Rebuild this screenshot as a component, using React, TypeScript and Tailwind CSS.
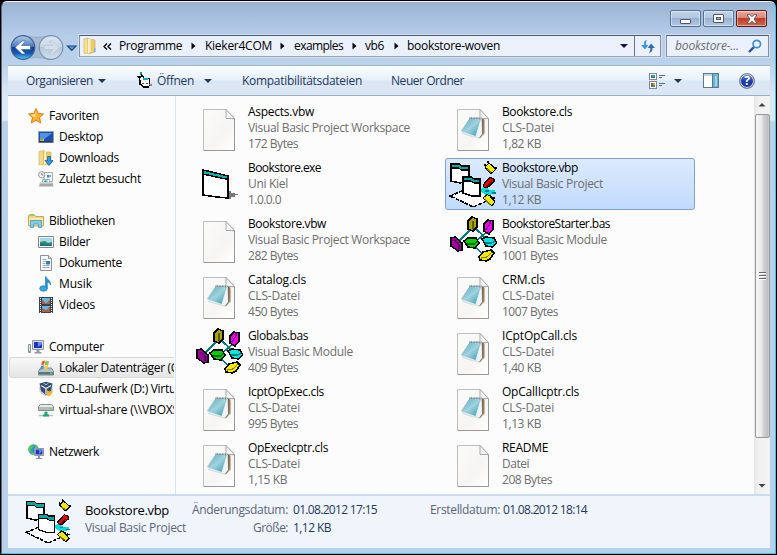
import { useLayoutEffect, useRef, type ReactNode } from "react";

/** Single-line label whose tracking is adjusted so that it fills a given width. */
function Fit({ t, w, className = "" }: { t: string; w: number; className?: string }) {
  const ref = useRef<HTMLSpanElement>(null);
  useLayoutEffect(() => {
    const el = ref.current;
    if (!el) return;
    el.style.letterSpacing = "0px";
    const natural = el.getBoundingClientRect().width;
    el.style.letterSpacing = `${(w + 1 - natural) / t.length}px`;
  }, [t, w]);
  return (
    <span ref={ref} className={`inline-block w-max shrink-0 whitespace-pre ${className}`}>
      {t}
    </span>
  );
}

function Page({ note = false }: { note?: boolean }) {
  return (
    <svg width="48" height="48" viewBox="0 0 48 48" className="shrink-0">
      <defs>
        <linearGradient id="paper" x1="0" y1="0" x2="1" y2="1">
          <stop offset="0" stopColor="#fbfbfa" />
          <stop offset=".6" stopColor="#f6f5f3" />
          <stop offset="1" stopColor="#fff" />
        </linearGradient>
        <linearGradient id="cover" x1="0" y1="0" x2="1" y2="1">
          <stop offset="0" stopColor="#5aa3b6" />
          <stop offset=".5" stopColor="#9fd3de" />
          <stop offset="1" stopColor="#3797ae" />
        </linearGradient>
      </defs>
      <path d="M8.500 5.500H31l8.500 9V46.500H8.500Z" fill="url(#paper)" stroke="#bdbdbd" />
      <path d="M9 46.500H39.500V15" fill="none" stroke="#979797" />
      <path d="M31 5.500V14.500H39.500Z" fill="#f4f4f4" stroke="#a9a9a9" />
      {note && (
        <g>
          <path d="M33 14.500l2.500 1v14l-4.500 4.500-2-2z" fill="#9b7a54" />
          <path d="M20.500 14.500l12-1L34 30l-3.500 4.500-17-5z" fill="#e3edf1" stroke="#b5c6cc" strokeWidth=".5" />
          <path d="M20.500 14.500l11.500.5-5.500 17L12 27z" fill="url(#cover)" />
          <path d="M20.500 14l12 .5" stroke="#6b777b" strokeWidth="1.500" strokeDasharray="1 .6" />
          <path d="M31.500 16.500l1.500 13-3 3.500-3-1z" fill="#eef4f7" />
          <path d="M33.500 15v15l-3 4" stroke="#6d5a45" strokeWidth=".8" fill="none" />
        </g>
      )}
    </svg>
  );
}

function Exe() {
  return (
    <svg width="48" height="48" viewBox="0 0 48 48" shapeRendering="crispEdges" className="shrink-0">
      <path d="M8 10L33 16V38L22 37L8 35Z" fill="#fff" stroke="#000" strokeWidth="1.600" />
      <path d="M8 10L33 16V19.500L8 14Z" fill="#00b5b5" stroke="#000" strokeWidth="1.500" />
      <path d="M34 31H36V33H40V34H43V35H40V37H36V39H34Z" fill="#777" />
    </svg>
  );
}

function Vbp({ size = 48 }: { size?: number }) {
  return (
    <svg width={size} height={size} viewBox="0 0 48 48" shapeRendering="crispEdges" className="shrink-0">
      <path d="M1 36L13 31H32L45 38L24 47L14 42Z" fill="#fff" stroke="#000" strokeWidth="1.500" strokeDasharray="4 1" />
      <path d="M2 4L10 4L12 6H20V21L11 23L2 21Z" fill="#fff" stroke="#000" strokeWidth="1.600" />
      <path d="M2 4H10L12 6H20V10H12L10 8H2Z" fill="#00a8a8" stroke="#000" strokeWidth="1.100" />
      <path d="M31 28L37 27L40 30H46V33L41 35H37L31 31Z" fill="#00dede" />
      <path d="M36 31h4m3 2h4" stroke="#007f7f" strokeWidth="1.200" />
      <path d="M14 17H22L25 19H31V36H23L14 33Z" fill="#fff" stroke="#000" strokeWidth="1.600" />
      <path d="M14 17H22L25 19H31V23H25L22 21H14Z" fill="#00a8a8" stroke="#000" strokeWidth="1.100" />
      <path d="M36 7L40 3L47 9L43 13H41Z" fill="#f2e800" stroke="#000" strokeWidth="1.200" />
      <path d="M39 1v2M35 5h2M45 8h3" stroke="#000" strokeWidth="1.500" />
      <path d="M38 9L42 12.500" stroke="#7d7700" strokeWidth="1.500" />
      <path d="M34 25L41 17.500L45 19V22L38 28L35 27Z" fill="#ed0000" stroke="#000" strokeWidth="1.200" />
      <path d="M37 27L43 21.500" stroke="#800000" strokeWidth="1.500" />
      <path d="M34 38L38 34.500L41 36L46 42L43 45.500L40 44Z" fill="#f2e800" stroke="#000" strokeWidth="1.200" />
      <path d="M36 39.500L41 44" stroke="#7d7700" strokeWidth="1.500" />
    </svg>
  );
}

function Bas() {
  return (
    <svg width="48" height="48" viewBox="0 0 48 48" shapeRendering="crispEdges" className="shrink-0">
      <path d="M21 14L10 25M27 13L40 25M38 16L26 26M24 29L35 39" stroke="#007c7c" strokeWidth="1.800" />
      <g stroke="#000" strokeWidth="1.500">
        <path d="M19 5L23 1L28 3V11L24 15L19 13Z" fill="#a8a300" />
        <path d="M35 8L39 4L44 5V13L40 18L35 15Z" fill="#f000f0" />
        <path d="M2 22L6 21L13 27V34L9 35L2 30Z" fill="#a000a0" />
        <path d="M15 25L19 22L27 22L30 27L26 32L19 31Z" fill="#00cf00" />
        <path d="M33 23L37 21L45 22L48 27L43 31L37 30Z" fill="#00e4e4" />
        <path d="M30 41L34 36L42 34L45 37L41 43L37 45L31 44Z" fill="#f2e800" />
      </g>
      <g fill="none" strokeWidth="1.400">
        <path d="M24 5V13" stroke="#5e5b00" />
        <path d="M37 14L41 8V5" stroke="#850085" />
        <path d="M5 24L10 28V33" stroke="#500050" />
        <path d="M18 28H26L28 25" stroke="#007000" />
        <path d="M36 27H43L46 25" stroke="#007f7f" />
        <path d="M32 42L38 41L43 36" stroke="#858000" />
      </g>
    </svg>
  );
}

type Kind = "page" | "note" | "exe" | "vbp" | "bas";
interface FileItem {
  kind: Kind;
  name: [string, number];
  type: [string, number];
  size: [string, number];
  sel?: boolean;
}

const CLS: [string, number] = ["CLS-Datei", 51];
const WS: [string, number] = ["Visual Basic Project Workspace", 161];
const MOD: [string, number] = ["Visual Basic Module", 104];

const files: FileItem[] = [
  { kind: "page", name: ["Aspects.vbw", 65], type: WS, size: ["172 Bytes", 49] },
  { kind: "note", name: ["Bookstore.cls", 69], type: CLS, size: ["1,82 KB", 38] },
  { kind: "exe", name: ["Bookstore.exe", 72], type: ["Uni Kiel", 39], size: ["1.0.0.0", 32] },
  { kind: "vbp", name: ["Bookstore.vbp", 75], type: ["Visual Basic Project", 100], size: ["1,12 KB", 38], sel: true },
  { kind: "page", name: ["Bookstore.vbw", 77], type: WS, size: ["282 Bytes", 49] },
  { kind: "bas", name: ["BookstoreStarter.bas", 107], type: MOD, size: ["1001 Bytes", 55] },
  { kind: "note", name: ["Catalog.cls", 57], type: CLS, size: ["450 Bytes", 49] },
  { kind: "note", name: ["CRM.cls", 42], type: CLS, size: ["1007 Bytes", 55] },
  { kind: "bas", name: ["Globals.bas", 59], type: MOD, size: ["409 Bytes", 49] },
  { kind: "note", name: ["ICptOpCall.cls", 74], type: CLS, size: ["1,40 KB", 38] },
  { kind: "note", name: ["IcptOpExec.cls", 75], type: CLS, size: ["995 Bytes", 49] },
  { kind: "note", name: ["OpCallIcptr.cls", 76], type: CLS, size: ["1,13 KB", 38] },
  { kind: "note", name: ["OpExecIcptr.cls", 79], type: CLS, size: ["1,15 KB", 38] },
  { kind: "page", name: ["README", 45], type: ["Datei", 26], size: ["208 Bytes", 49] },
];

function FileIcon({ kind }: { kind: Kind }) {
  if (kind === "exe") return <Exe />;
  if (kind === "vbp") return <Vbp />;
  if (kind === "bas") return <Bas />;
  return <Page note={kind === "note"} />;
}

function FileCell({ f }: { f: FileItem }) {
  return (
    <div
      className={`flex h-[52px] rounded-[3px] border pt-px pl-[3px] ${
        f.sel ? "border-[#7da2ce] bg-linear-to-b from-[#dceafc] to-[#c1dbfc]" : "border-transparent"
      }`}
    >
      <FileIcon kind={f.kind} />
      <div className="ml-[5px] flex flex-col items-start text-[12px] leading-4 text-[#6d6d6d]">
        <Fit t={f.name[0]} w={f.name[1]} className="text-black" />
        <Fit t={f.type[0]} w={f.type[1]} />
        <Fit t={f.size[0]} w={f.size[1]} />
      </div>
    </div>
  );
}

function Svg16({ children, crisp = false }: { children: ReactNode; crisp?: boolean }) {
  return (
    <svg width="16" height="16" viewBox="0 0 16 16" className="shrink-0" shapeRendering={crisp ? "crispEdges" : "auto"}>
      {children}
    </svg>
  );
}

const icons: Record<string, ReactNode> = {
  star: (
    <Svg16>
      <path d="M8 .7l2.200 4.800 5.300.5-4 3.600 1.200 5.400L8 12.200 3.300 15l1.200-5.400-4-3.600 5.300-.5z" fill="#ffb22e" stroke="#e07a12" />
      <path d="M8 2.500L6.500 6.500 3 7l4 2.500z" fill="#ffe9a0" />
    </Svg16>
  ),
  desktop: (
    <Svg16>
      <path d="M.5 2.500h15v11H.5z" fill="#1b4fae" stroke="#9aa3ad" />
      <path d="M2 4h12L4 12H2z" fill="#4f93e2" />
      <path d="M1 12h14v1.500H1z" fill="#2c3e5c" />
      <path d="M2 10h2v2H2z" fill="#f08a2c" />
      <path d="M4 10h2v2H4z" fill="#8fd43c" />
    </Svg16>
  ),
  downloads: (
    <Svg16>
      <path d="M1 1.500l5-1V14l-5 1z" fill="#f3d98a" stroke="#d5b45a" strokeWidth=".7" />
      <path d="M5 2h8v12l-7 1z" fill="#edcb6c" stroke="#d5b45a" strokeWidth=".7" />
      <path d="M6 1.500h2v12L6 15z" fill="#fff0bd" />
      <path d="M9.500 6.500h3v4h2.500L11 15.500 7 10.500h2.500z" fill="#2f98e0" stroke="#1766ab" strokeWidth=".8" />
    </Svg16>
  ),
  recent: (
    <Svg16>
      <path d="M6 1.500h8.500v9H6z" fill="#f5f7f8" stroke="#a5aaae" />
      <path d="M4.500 8.500h7v4h-7z" fill="#fff" stroke="#a5aaae" />
      <path d="M2 11.500h12.500l1 4H1z" fill="#a3a9ac" />
      <path d="M1.500 12h12" stroke="#dfe2e4" />
      <path d="M9 4h2.500v2.500H9z" fill="#368bd4" />
      <path d="M12 4h1v2h-1z" fill="#73a9d0" />
      <path d="M6 9.500h3.500v1.500H6z" fill="#38a5a6" />
      <circle cx="3.800" cy="3.800" r="3.200" fill="#eef0f2" stroke="#9a9fa4" />
      <path d="M3.800 2v2H5.500" stroke="#666" fill="none" strokeWidth=".8" />
    </Svg16>
  ),
  libraries: (
    <Svg16>
      <path d="M.5 2.500V13h15V3.500h-8l-1-1.500H1z" fill="#eed98c" stroke="#c5a64e" />
      <path d="M1 5h14v7H1z" fill="#f8e8ab" />
      <path d="M2 2h4" stroke="#7ccb4c" strokeWidth="1.500" />
      <path d="M2.500 14.500V7.500h11v7h-3v-3.500h-5v3.500z" fill="#86cdea" stroke="#4395bd" strokeWidth=".8" />
    </Svg16>
  ),
  pictures: (
    <Svg16>
      <path d="M.5 2.500h15v11H.5z" fill="#fff" stroke="#7e878e" />
      <path d="M2 4h12v8H2z" fill="#a1d5f0" />
      <path d="M2 8l5-1 3 2 4-1v4H2z" fill="#2c8a6e" />
      <path d="M2 10l12 1v1H2z" fill="#236a8e" />
    </Svg16>
  ),
  documents: (
    <Svg16>
      <path d="M2.500.5h8l3 3v12h-11z" fill="#fff" stroke="#8c9196" />
      <path d="M10.500.5v3h3" fill="#e8e8e8" stroke="#8c9196" />
      <path d="M4.500 4.500h4M4.500 6.500h3M4.500 8.500h3M4.500 10.500h7M4.500 12.500h7" stroke="#98a9c8" />
      <path d="M8 6h4v3.500H8z" fill="#2e7bc9" />
    </Svg16>
  ),
  music: (
    <Svg16>
      <path d="M8 .5c.5 3 5 3.500 4.500 8.500C12 7 10.500 6 9.300 6v6.500H7.500V.5z" fill="#2497d8" stroke="#1b6dac" strokeWidth=".6" />
      <ellipse cx="5.500" cy="12.500" rx="3.800" ry="2.800" fill="#34a6e5" stroke="#1b6dac" strokeWidth=".6" />
    </Svg16>
  ),
  videos: (
    <Svg16 crisp>
      <path d="M1 0h14v16H1z" fill="#3a4349" />
      <path d="M4 1h8v6H4zM4 9h8v6H4z" fill="#6ab4e3" />
      <path d="M4 3l4 3 4-4v5H4zM4 11l4 2 4-3v5H4z" fill="#ad6445" />
      <path d="M2.500 1v15M13.500 1v15" stroke="#fff" strokeDasharray="1 1" />
    </Svg16>
  ),
  computer: (
    <Svg16>
      <path d="M4.500 1.500h11v9h-11z" fill="#dce1e5" stroke="#8f989e" />
      <path d="M6 3h8v6H6z" fill="#1b35c7" />
      <path d="M10 3h4v2l-4 3z" fill="#6b8bf0" />
      <path d="M8.500 11h3v2h2v1.500h-7V13h2z" fill="#8f989e" />
      <path d="M.5 5.500h2v8h-2z" fill="#e8ebed" stroke="#868e92" />
      <path d="M1 12h2v1H1z" fill="#70c460" />
    </Svg16>
  ),
  drive: (
    <Svg16>
      <path d="M2.500 8h11l2 3.500v3.500H.5v-3.500z" fill="#b6c3c9" stroke="#67757c" strokeWidth=".8" />
      <path d="M1 12h14v2.500H1z" fill="#55777f" />
      <path d="M12 12.500h2v1h-2z" fill="#70f070" />
      <path d="M4 1.500l3-1-.8 4-3 .8z" fill="#e85a2c" />
      <path d="M7.500.5c1 .8 2 .8 3.500.5l-.8 4C9 5.500 8 5.300 6.800 4.500z" fill="#8cc63e" />
      <path d="M3 6l3-.8-.8 3.800-3 .8z" fill="#3f93dd" />
      <path d="M6.500 5.200c1.200.8 2 .8 3.500.4l-.8 4c-1.200.3-2.200.2-3.500-.6z" fill="#ffc83a" />
    </Svg16>
  ),
  cd: (
    <Svg16>
      <circle cx="8" cy="8" r="7" fill="#b9c4cf" opacity=".7" />
      <path d="M1.500 2.500L8 .8l6.500 1.700L13 10l-5 4-5-4z" fill="#344c70" />
      <path d="M3 4.500l5 3 5-3M8 7.500V13" stroke="#dfe6ef" strokeWidth="1.400" fill="none" />
      <path d="M5.500 2L8 3.800 10.500 2" stroke="#b8c8da" fill="none" />
      <path d="M9 9.500l3 1 3-1-1 3-3 3-2.500-2z" fill="#f5b52e" />
    </Svg16>
  ),
  share: (
    <Svg16>
      <path d="M2.500 2.500h11l2 2v4h-15v-4z" fill="#e8ebec" stroke="#858d91" />
      <path d="M1 5h14v3H1z" fill="#b3bbbf" />
      <path d="M12 6h2v1.500h-2z" fill="#5ae04c" />
      <path d="M8 9v4.500M1 13.500h14" stroke="#9dcbb4" strokeWidth="1.600" />
      <path d="M6.500 10h3v2.500h1.500v2H5v-2h1.500z" fill="#1da574" />
    </Svg16>
  ),
  network: (
    <Svg16>
      <circle cx="5.500" cy="5.500" r="5.200" fill="#2e91d2" />
      <path d="M2 2c2-2 4-1 3 1s-3 2-2 4-2 1-2.500-1S1 3 2 2zM7 1c2 0 3 2 3 3L7 4zM3 8l3 1v2H4z" fill="#5cc84b" />
      <path d="M6.500 4.500h9v7h-9z" fill="#d8dfe3" stroke="#8c969d" />
      <path d="M7.500 5.500h7v5h-7z" fill="#1b35c7" />
      <path d="M11 5.500h3.500V7L11 10z" fill="#5d80ee" />
      <path d="M10 12h2v2h2v1H8v-1h2z" fill="#8c969d" />
    </Svg16>
  ),
};

type Nav = { icon: string; t: string; w: number; root?: boolean; sel?: boolean } | null;
const nav: Nav[] = [
  { icon: "star", t: "Favoriten", w: 49, root: true },
  { icon: "desktop", t: "Desktop", w: 43 },
  { icon: "downloads", t: "Downloads", w: 59 },
  { icon: "recent", t: "Zuletzt besucht", w: 81 },
  null,
  { icon: "libraries", t: "Bibliotheken", w: 65, root: true },
  { icon: "pictures", t: "Bilder", w: 30 },
  { icon: "documents", t: "Dokumente", w: 62 },
  { icon: "music", t: "Musik", w: 32 },
  { icon: "videos", t: "Videos", w: 35 },
  null,
  { icon: "computer", t: "Computer", w: 54, root: true },
  { icon: "drive", t: "Lokaler Datenträger (C:)", w: 124, sel: true },
  { icon: "cd", t: "CD-Laufwerk (D:) Virtu", w: 116 },
  { icon: "share", t: "virtual-share (\\\\VBOXS", w: 119 },
  null,
  { icon: "network", t: "Netzwerk", w: 49, root: true },
];

function Caret({ className = "" }: { className?: string }) {
  return (
    <svg width="8" height="4" viewBox="0 0 8 4" className={`shrink-0 ${className}`}>
      <path d="M0 0H8L4 4Z" fill="currentColor" />
    </svg>
  );
}

function Crumb({ className = "" }: { className?: string }) {
  return (
    <svg width="5" height="8" viewBox="0 0 5 8" className={`shrink-0 ${className}`}>
      <path d="M.5 0.500V7.500L4.500 4Z" fill="#000" />
    </svg>
  );
}

function Title() {
  const btn = "flex h-[17px] w-[31px] items-center justify-center rounded-[2px] border shadow-[inset_0_0_0_1px_rgba(255,255,255,.45)]";
  const blue = "border-[#56708f] bg-[linear-gradient(#c0d3e9_0%,#b0c7e1_48%,#98b3d1_50%,#afc8e4_100%)]";
  return (
    <div className="flex h-[33px] shrink-0 justify-end gap-[2px] pt-2 pr-2">
      <div className={`${btn} ${blue}`}>
        <div className="mt-[5px] h-[5px] w-[11px] rounded-[1px] border border-[#535666] bg-white" />
      </div>
      <div className={`${btn} ${blue}`}>
        <div className="flex h-[9px] w-[11px] items-center justify-center rounded-[1px] border border-[#535666] bg-white">
          <div className="h-[3px] w-[5px] border border-[#535666] bg-[#9fb8d4]" />
        </div>
      </div>
      <div className={`${btn} border-[#5c1a20] bg-[linear-gradient(#e8a99c_0%,#d98676_48%,#bd3c22_50%,#cf6a4e_100%)]`}>
        <svg width="12" height="10" viewBox="0 0 12 10">
          <path d="M1 .7H4L6 2.800 8 .7H11L8 5 11 9.300H8L6 7.200 4 9.300H1L4 5Z" fill="#fff" stroke="#535666" strokeWidth=".9" />
        </svg>
      </div>
    </div>
  );
}

function NavButtons() {
  return (
    <svg width="70" height="28" viewBox="1 1 70 28" className="shrink-0">
      <defs>
        <linearGradient id="back" x1="0" y1="0" x2="0" y2="1">
          <stop offset="0" stopColor="#b4cdeb" />
          <stop offset=".45" stopColor="#4a7cc2" />
          <stop offset=".5" stopColor="#123f91" />
          <stop offset=".75" stopColor="#135ab8" />
          <stop offset="1" stopColor="#4bd0f8" />
        </linearGradient>
        <linearGradient id="fwd" x1="0" y1="0" x2="0" y2="1">
          <stop offset="0" stopColor="#dce7f2" />
          <stop offset=".49" stopColor="#c8d6e5" />
          <stop offset=".5" stopColor="#b4c7db" />
          <stop offset="1" stopColor="#d2e2f1" />
        </linearGradient>
      </defs>
      <path d="M14 1.500Q30 5 42 1.500L55 14 42 26 Q29 21 14 26Z" fill="#a3bbd5" stroke="#91a8c4" strokeWidth=".8" />
      <circle cx="15" cy="13.500" r="11.800" fill="url(#back)" stroke="#47618c" strokeWidth="1.200" />
      <circle cx="43" cy="13.500" r="11.800" fill="url(#fwd)" stroke="#7d91ab" strokeWidth="1.200" />
      <path d="M7 13.500L14 7H17.500L13.500 11.500H22.500V15.500H13.500L17.500 20H14Z" fill="#fff" stroke="#3558a0" strokeWidth=".6" />
      <path d="M51.500 13.500L44.500 7H41L45 11.500H36V15.500H45L41 20H44.500Z" fill="#d4dee9" stroke="#b3c3d5" strokeWidth=".6" />
      <path d="M59.500 12H68L63.750 16.500Z" fill="#56a4df" stroke="#1d4674" strokeWidth="1.200" />
    </svg>
  );
}

function AddressRow() {
  const field = "border border-[#848d9a] border-t-[#54596b] border-b-[#9aa5b5] bg-[#eaf1fa] shadow-[0_0_0_1px_rgba(225,236,248,.6)]";
  return (
    <div className="flex h-[30px] shrink-0 pl-[7px]">
      <NavButtons />
      <div className={`flex h-[22px] w-[582px] shrink-0 items-center text-[12px] leading-5 text-black ${field}`}>
        <svg width="16" height="18" viewBox="0 0 16 18" className="ml-[2px] shrink-0">
          <path d="M2 2l4-1 1 15-5 .5z" fill="#f5df97" stroke="#d8b964" strokeWidth=".7" />
          <path d="M6 2l7 1v12l-7 2z" fill="#eacb70" stroke="#d2ae52" strokeWidth=".7" />
          <path d="M6 2h2.500v13L6 17z" fill="#fff1c0" />
          <path d="M12 11h1.500v4H12z" fill="#6eb9e5" />
        </svg>
        <svg width="9" height="7" viewBox="0 0 9 7" className="ml-[5px] shrink-0">
          <path d="M4 .5L1 3.500L4 6.500M8 .5L5 3.500L8 6.500" stroke="#000" strokeWidth="1.300" fill="none" />
        </svg>
        <Fit t="Programme" w={62} className="ml-[7px]" />
        <Crumb className="ml-[9px]" />
        <Fit t="Kieker4COM" w={66} className="ml-[9px]" />
        <Crumb className="ml-[8px]" />
        <Fit t="examples" w={48} className="ml-[9px]" />
        <Crumb className="ml-[9px]" />
        <Fit t="vb6" w={18} className="ml-[8px]" />
        <Crumb className="ml-[10px]" />
        <Fit t="bookstore-woven" w={92} className="ml-[8px]" />
        <div className="flex-1" />
        <Caret className="mr-[6px] text-[#0c0c5c]" />
        <div className="flex h-full w-[26px] items-center justify-center border-l border-[#6b7484]">
          <svg width="14" height="13" viewBox="0 0 14 13">
            <path d="M6 0C3.500.5 3 2 3 5H0L4 9.500 7.500 5H5.200C5 3 5 1 6 0Z" fill="#3d98d8" />
            <path d="M8 13C10.500 12.500 11.500 11 11.500 8H14L10 3.500 6.700 8H9.200C9.400 10 9 12 8 13Z" fill="#2d6db8" />
          </svg>
        </div>
      </div>
      <div className={`ml-[5px] flex h-[22px] w-[103px] shrink-0 items-center pl-2 text-[12px] leading-5 text-[#6d6d6d] italic ${field}`}>
        <Fit t="bookstore-..." w={63} />
        <svg width="14" height="14" viewBox="0 0 14 14" className="ml-[9px]">
          <path d="M1 13L6 8" stroke="#2b4f9a" strokeWidth="2.400" />
          <circle cx="8.800" cy="5" r="3.700" fill="#e6f3fd" stroke="#3b8ad4" strokeWidth="1.700" />
        </svg>
      </div>
    </div>
  );
}

function Toolbar() {
  return (
    <div className="flex h-[31px] shrink-0 items-center border-t border-b border-t-[#9fb6d2] border-b-[#a0afc9] bg-[linear-gradient(#fbfdff_0%,#eef5fc_30%,#e6effa_48%,#dce7f5_52%,#dbe7f5_100%)] pl-[18px] text-[12px] leading-5 text-[#1e395b]">
      <Fit t="Organisieren" w={66} />
      <Caret className="ml-[5px]" />
      <svg width="17" height="17" viewBox="0 0 17 17" shapeRendering="crispEdges" className="ml-[30px] shrink-0">
        <path d="M3 7L6 4 8 6H13V14L8 15 4 12Z" fill="#fff" stroke="#000" />
        <path d="M7 7h5" stroke="#00b5b5" strokeWidth="2" />
        <path d="M0 4h5v2H2z" fill="#000" />
        <path d="M4 0h2v3H4z" fill="#00a070" />
        <path d="M5 3l3 2M4 8v4l4 3h5" stroke="#000" strokeWidth="1.500" fill="none" />
        <path d="M6 11h2m2 0h2" stroke="#b02020" />
        <path d="M13 12h3v2h-2z" fill="#888" />
      </svg>
      <Fit t="Öffnen" w={36} className="ml-[4px]" />
      <Caret className="ml-[10px]" />
      <Fit t="Kompatibilitätsdateien" w={119} className="ml-[30px]" />
      <Fit t="Neuer Ordner" w={72} className="ml-[29px]" />
      <div className="flex-1" />
      <svg width="16" height="16" viewBox="0 0 16 16" shapeRendering="crispEdges" className="shrink-0">
        <path d="M.5.500h7v6h-7zM.5 8.500h7v7h-7z" fill="#fff" stroke="#7f8994" />
        <path d="M2 2h4v3H2z" fill="#368fbb" />
        <path d="M2 4h4v1H2z" fill="#27845d" />
        <path d="M2 10h2v2H2z" fill="#c53b2d" />
        <path d="M4 10h2v2H4z" fill="#e2a51e" />
        <path d="M2 12h2v2H2z" fill="#2f79d3" />
        <path d="M4 12h2v2H4z" fill="#3f9a3a" />
        <path d="M10 2.500h6M10 4.500h3M10 10.500h6M10 12.500h3" stroke="#5a6c8c" />
      </svg>
      <Caret className="ml-[9px]" />
      <svg width="17" height="15" viewBox="0 0 17 15" shapeRendering="crispEdges" className="ml-[21px] shrink-0">
        <path d="M.5.500h15v14H.5z" fill="#fff" stroke="#5e7690" />
        <path d="M1 1h14v2H1z" fill="#c4d3e4" />
        <path d="M10 1h5v13h-5z" fill="#62b6d3" />
        <path d="M12 3h2v10h-2z" fill="#9ad8e9" />
        <path d="M9.500 1v13" stroke="#5e7690" />
      </svg>
      <div className="mr-[15px] ml-[19px] flex h-4 w-4 shrink-0 items-center justify-center rounded-full border border-[#7b838e] bg-[linear-gradient(#6a8fdc,#1b3fae_50%,#1532a0)] text-[12px] leading-none font-bold text-white shadow-[inset_0_0_0_1px_#c9d2e2]">
        ?
      </div>
    </div>
  );
}

function Scrollbar() {
  return (
    <div className="flex w-4 shrink-0 flex-col items-center bg-[linear-gradient(90deg,#e6e6e6,#f1f1f1_30%,#f3f3f3)]">
      <svg width="16" height="18" viewBox="0 0 16 18" className="shrink-0">
        <path d="M4.500 10.500H11.500L8 7Z" fill="#434343" />
      </svg>
      <div className="flex h-[324px] w-[15px] shrink-0 flex-col items-center justify-center gap-px rounded-[2px] border border-[#979797] bg-[linear-gradient(90deg,#f6f6f6_0%,#e9e9eb_45%,#d6d6d9_52%,#bebec2_90%,#d2d2d5_100%)]">
        <div className="h-[2px] w-[7px] border-b border-white bg-[#686868]" />
        <div className="h-[2px] w-[7px] border-b border-white bg-[#686868]" />
        <div className="h-[2px] w-[7px] border-b border-white bg-[#686868]" />
      </div>
      <div className="flex-1" />
      <svg width="16" height="17" viewBox="0 0 16 17" className="shrink-0">
        <path d="M4.500 7H11.500L8 10.500Z" fill="#434343" />
      </svg>
    </div>
  );
}

function Details() {
  return (
    <div className="flex h-[54px] shrink-0 border-t-2 border-[#cddcec] bg-[#f0f4fb] text-[12px] text-[#5a6779]">
      <div className="mt-[2px] ml-[17px] shrink-0">
        <Vbp size={46} />
      </div>
      <div className="mt-[5px] ml-[14px] flex w-[107px] flex-col items-start leading-[18px]">
        <Fit t="Bookstore.vbp" w={83} className="text-[13px] text-black" />
        <Fit t="Visual Basic Project" w={100} />
      </div>
      <div className="mt-[5px] grid h-9 grid-cols-[96px_85px] gap-x-[5px] leading-[18px]">
        <Fit t="Änderungsdatum:" w={95} className="justify-self-end" />
        <Fit t="01.08.2012 17:15" w={83} className="justify-self-start text-[#1e395b]" />
        <Fit t="Größe:" w={34} className="justify-self-end" />
        <Fit t="1,12 KB" w={37} className="justify-self-start text-[#1e395b]" />
      </div>
      <div className="mt-[5px] ml-[52px] flex items-start gap-[3px] leading-[18px]">
        <Fit t="Erstelldatum:" w={69} />
        <Fit t="01.08.2012 18:14" w={83} className="text-[#1e395b]" />
      </div>
    </div>
  );
}

export default function App() {
  return (
    <div className="h-[555px] w-[777px] overflow-hidden bg-black p-px font-['Open_Sans','Noto_Sans',sans-serif]">
      <div className="flex h-[553px] w-[775px] flex-col rounded-t-[6px] border border-t-[#eef4fb] border-r-[#35c6e4] border-b-[#35c6e4] border-l-[#5b6b80] bg-[linear-gradient(#9ab4d2_0px,#b5cde9_34px,#b9d1ea_60px,#dbe8f6_94px,#dbe8f6_118px,#b9d1ea_120px,#b9d0ea_100%)]">
        <Title />
        <AddressRow />
        <div className="mr-[5px] ml-[6px] flex h-[483px] shrink-0 flex-col">
          <Toolbar />
          <div className="flex h-[398px] shrink-0 bg-[#fcfcfc]">
            <div className="flex w-[168px] shrink-0 flex-col border-r border-[#d6e5f5] pt-[9px] pr-px pl-px">
              {nav.map((n, i) =>
                n === null ? (
                  <div key={i} className="h-[21px] shrink-0" />
                ) : (
                  <div
                    key={i}
                    className={`flex h-[21px] shrink-0 items-center gap-[5px] overflow-hidden rounded-l-[3px] border border-r-0 text-[12px] leading-[19px] text-black ${
                      n.root ? "pl-[18px]" : "pl-[28px]"
                    } ${n.sel ? "border-[#d9d9d9] bg-linear-to-b from-[#f8f8f8] to-[#e5e5e5]" : "border-transparent"}`}
                  >
                    {icons[n.icon]}
                    <Fit t={n.t} w={n.w} />
                  </div>
                ),
              )}
            </div>
            <div className="grid flex-1 auto-rows-[52px] grid-cols-[250px_250px] content-start gap-x-1 gap-y-1 overflow-hidden pt-[6px] pl-[15px]">
              {files.map((f) => (
                <FileCell key={f.name[0]} f={f} />
              ))}
            </div>
            <Scrollbar />
          </div>
          <Details />
        </div>
      </div>
    </div>
  );
}
